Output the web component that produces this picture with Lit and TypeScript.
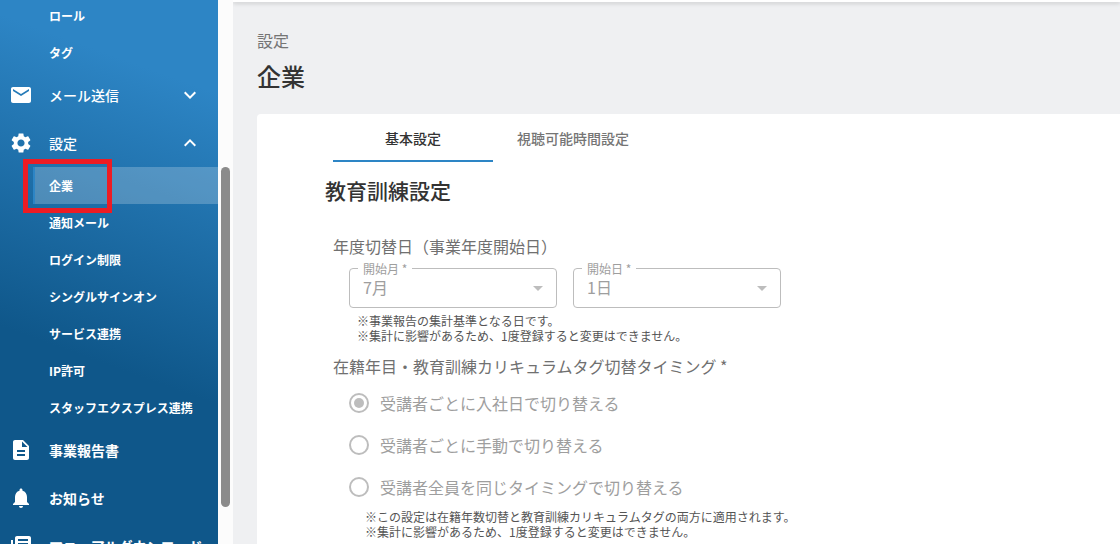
import { LitElement, html, css, nothing } from "lit";
import { customElement, property } from "lit/decorators.js";
import { classMap } from "lit/directives/class-map.js";

const ICONS: Record<string, string> = {
  mail: "M20 4H4c-1.1 0-1.99.9-1.99 2L2 18c0 1.1.9 2 2 2h16c1.1 0 2-.9 2-2V6c0-1.1-.9-2-2-2zm0 4l-8 5-8-5V6l8 5 8-5v2z",
  settings:
    "M19.14 12.94c.04-.3.06-.61.06-.94 0-.32-.02-.64-.07-.94l2.03-1.58c.18-.14.23-.41.12-.61l-1.92-3.32c-.12-.22-.37-.29-.59-.22l-2.39.96c-.5-.38-1.03-.7-1.62-.94l-.36-2.54c-.04-.24-.24-.41-.48-.41h-3.84c-.24 0-.43.17-.47.41l-.36 2.54c-.59.24-1.13.57-1.62.94l-2.39-.96c-.22-.08-.47 0-.59.22L2.74 8.87c-.12.21-.08.47.12.61l2.03 1.58c-.05.3-.09.63-.09.94s.02.64.07.94l-2.03 1.58c-.18.14-.23.41-.12.61l1.92 3.32c.12.22.37.29.59.22l2.39-.96c.5.38 1.03.7 1.62.94l.36 2.54c.05.24.24.41.48.41h3.84c.24 0 .44-.17.47-.41l.36-2.54c.59-.24 1.13-.56 1.62-.94l2.39.96c.22.08.47 0 .59-.22l1.92-3.32c.12-.22.07-.47-.12-.61l-2.01-1.58zM12 15.6c-1.98 0-3.6-1.62-3.6-3.6s1.62-3.6 3.6-3.6 3.6 1.62 3.6 3.6-1.62 3.6-3.6 3.6z",
  report:
    "M14 2H6c-1.1 0-1.99.9-1.99 2L4 20c0 1.1.89 2 1.99 2H18c1.1 0 2-.9 2-2V8l-6-6zm2 16H8v-2h8v2zm0-4H8v-2h8v2zm-3-5V3.5L18.5 9H13z",
  bell: "M12 22c1.1 0 2-.9 2-2h-4c0 1.1.89 2 2 2zm6-6v-5c0-3.07-1.64-5.64-4.5-6.32V4c0-.83-.67-1.5-1.5-1.5s-1.5.67-1.5 1.5v.68C7.63 5.36 6 7.92 6 11v5l-2 2v1h16v-1l-2-2z",
  books:
    "M4 6H2v14c0 1.1.9 2 2 2h14v-2H4V6zm16-4H8c-1.1 0-2 .9-2 2v12c0 1.1.9 2 2 2h12c1.1 0 2-.9 2-2V4c0-1.1-.9-2-2-2zm-1 9H9V9h10v2zm-4 4H9v-2h6v2zm4-8H9V5h10v2z",
  more: "M16.59 8.59L12 13.17 7.41 8.59 6 10l6 6 6-6z",
  less: "M12 8l-6 6 1.41 1.41L12 10.83l4.59 4.58L18 14z",
  drop: "M7 10l5 5 5-5z",
};

const icon = (name: string, cls = "icon") =>
  html`<svg class=${cls} viewBox="0 0 24 24" aria-hidden="true"><path d=${ICONS[name]}></path></svg>`;

@customElement("side-menu")
class SideMenu extends LitElement {
  static styles = css`
    :host {
      display: flex;
      flex: none;
      overflow: hidden;
    }
    .menu {
      width: 218px;
      overflow: hidden;
      color: #fff;
      background: linear-gradient(200deg, #2d85c5 15%, #0f578a 65%);
    }
    .list {
      list-style: none;
      margin: 0;
      padding: 0;
    }
    .root {
      margin-top: -3px;
    }
    .sub,
    .head {
      box-sizing: border-box;
      display: flex;
      align-items: center;
      width: 100%;
      border: 0;
      background: none;
      color: inherit;
      font-family: inherit;
      text-align: left;
      text-decoration: none;
      white-space: nowrap;
    }
    .sub {
      height: 37px;
      padding-left: 49px;
      font-size: 12px;
      font-weight: 700;
    }
    .head {
      height: 48px;
      padding: 0 16px 0 9px;
      gap: 16px;
      font-size: 14px;
      font-weight: 700;
    }
    .group {
      font-weight: 500;
    }
    .text {
      flex: 1;
    }
    .icon {
      flex: none;
      width: 24px;
      height: 24px;
      fill: currentColor;
    }
    .current {
      position: relative;
    }
    .current .sub {
      width: auto;
      margin-left: 33px;
      padding-left: 14px;
      border-left: 2px solid #2d85c5;
      background: rgba(255, 255, 255, 0.22);
    }
    .mark {
      position: absolute;
      box-sizing: border-box;
      left: 23px;
      top: -8px;
      width: 89px;
      height: 54px;
      border: 5px solid #ed1c24;
      pointer-events: none;
    }
    .track {
      box-sizing: border-box;
      width: 15px;
      padding: 167px 3px 0;
      background: #fcfcfc;
    }
    .thumb {
      width: 9px;
      height: 340px;
      border-radius: 5px;
      background: #8b8b8b;
    }
  `;

  private sub(label: string, current = false) {
    return html`<li class=${classMap({ current })}>
      <a class="sub" href="#" aria-current=${current ? "page" : nothing}>${label}</a>
      ${current ? html`<span class="mark"></span>` : nothing}
    </li>`;
  }

  private group(name: string, label: string, open: boolean) {
    return html`<button class="head group" type="button" aria-expanded=${open}>
      ${icon(name)}<span class="text">${label}</span>${icon(open ? "less" : "more")}
    </button>`;
  }

  private page(name: string, label: string) {
    return html`<li><a class="head" href="#">${icon(name)}<span class="text">${label}</span></a></li>`;
  }

  render() {
    return html`
      <nav class="menu">
        <ul class="list root">
          ${["ロール", "タグ"].map((t) => this.sub(t))}
          <li>${this.group("mail", "メール送信", false)}</li>
          <li>
            ${this.group("settings", "設定", true)}
            <ul class="list">
              ${[
                "企業",
                "通知メール",
                "ログイン制限",
                "シングルサインオン",
                "サービス連携",
                "IP許可",
                "スタッフエクスプレス連携",
              ].map((t, i) => this.sub(t, i === 0))}
            </ul>
          </li>
          ${this.page("report", "事業報告書")}
          ${this.page("bell", "お知らせ")}
          ${this.page("books", "マニュアルダウンロード")}
        </ul>
      </nav>
      <div class="track"><div class="thumb"></div></div>
    `;
  }
}

@customElement("outlined-select")
class OutlinedSelect extends LitElement {
  @property() label = "";
  @property() value = "";

  static styles = css`
    :host {
      display: block;
      position: relative;
      width: 208px;
      color: #9e9e9e;
    }
    .label {
      position: absolute;
      left: 9px;
      top: -7px;
      padding: 0 5px;
      background: #fff;
      font-size: 12px;
      line-height: 16px;
    }
    .select {
      appearance: none;
      display: block;
      box-sizing: border-box;
      width: 100%;
      height: 40px;
      margin: 0;
      padding: 0 32px 2px 13px;
      border: 1px solid #bdbdbd;
      border-radius: 4px;
      background: #fff;
      color: inherit;
      font-family: inherit;
      font-size: 16px;
      opacity: 1;
    }
    .arrow {
      position: absolute;
      right: 7px;
      top: 8px;
      width: 24px;
      height: 24px;
      fill: #bdbdbd;
      pointer-events: none;
    }
  `;

  render() {
    return html`
      <select class="select" id="field" disabled required>
        <option>${this.value}</option>
      </select>
      <label class="label" for="field">${this.label} *</label>
      ${icon("drop", "arrow")}
    `;
  }
}

@customElement("app-root")
class AppRoot extends LitElement {
  static styles = css`
    :host {
      display: flex;
      height: 100vh;
      overflow: hidden;
      font-family: "Noto Sans CJK JP", "Noto Sans", sans-serif;
      color: #333;
    }
    .main {
      flex: 1;
      min-width: 0;
      overflow: hidden;
      background: #eff0f2;
    }
    .bar {
      height: 2px;
      background: #fff;
      box-shadow: 0 1px 4px rgba(0, 0, 0, 0.25);
    }
    .content {
      padding: 26px 0 0 24px;
    }
    .crumb {
      margin: 0;
      font-size: 16px;
      line-height: 24px;
      color: #757575;
    }
    .title {
      margin: 6px 0 20px;
      font-size: 24px;
      line-height: 36px;
      font-weight: 500;
    }
    .card {
      min-height: 100vh;
      padding: 0 68px;
      border-radius: 4px 0 0 0;
      background: #fff;
    }
    .tabs {
      display: flex;
      padding-left: 8px;
    }
    .tab {
      width: 160px;
      height: 48px;
      padding: 1px 0 0;
      border: 0;
      border-bottom: 2px solid transparent;
      background: none;
      font-family: inherit;
      font-size: 14px;
      font-weight: 500;
      color: #757575;
    }
    .active {
      border-color: #2d85c5;
      color: #333;
    }
    .heading {
      margin: 12px 0 24px;
      font-size: 21px;
      line-height: 32px;
      font-weight: 500;
    }
    .group {
      margin: 0;
      padding: 0 8px;
      border: 0;
    }
    .legend {
      padding: 0;
      font-size: 16px;
      line-height: 32px;
      color: #707070;
    }
    .fields {
      display: flex;
      gap: 16px;
      padding: 6px 16px 5px;
    }
    .note {
      margin: 0 0 7px;
      padding-left: 24px;
      font-size: 12px;
      line-height: 15px;
      color: #555;
    }
    .options {
      padding: 0 0 1px 16px;
    }
    .option {
      display: flex;
      align-items: center;
      gap: 11px;
      height: 42px;
      font-size: 16px;
      color: #9e9e9e;
    }
    .radio {
      appearance: none;
      display: grid;
      place-content: center;
      box-sizing: border-box;
      width: 20px;
      height: 20px;
      margin: 0;
      border: 2px solid #bdbdbd;
      border-radius: 50%;
    }
    .radio:checked::before {
      content: "";
      width: 10px;
      height: 10px;
      border-radius: 50%;
      background: #bdbdbd;
    }
    .options + .note {
      padding-left: 32px;
    }
  `;

  render() {
    const options = [
      "受講者ごとに入社日で切り替える",
      "受講者ごとに手動で切り替える",
      "受講者全員を同じタイミングで切り替える",
    ];
    return html`
      <side-menu></side-menu>
      <main class="main">
        <div class="bar"></div>
        <div class="content">
          <p class="crumb">設定</p>
          <h1 class="title">企業</h1>
          <section class="card">
            <div class="tabs" role="tablist">
              <button class="tab active" type="button" role="tab" aria-selected="true">基本設定</button>
              <button class="tab" type="button" role="tab" aria-selected="false">視聴可能時間設定</button>
            </div>
            <h2 class="heading">教育訓練設定</h2>
            <fieldset class="group">
              <legend class="legend">年度切替日（事業年度開始日）</legend>
              <div class="fields">
                <outlined-select label="開始月" value="7月"></outlined-select>
                <outlined-select label="開始日" value="1日"></outlined-select>
              </div>
              <p class="note">
                ※事業報告の集計基準となる日です。<br />※集計に影響があるため、1度登録すると変更はできません。
              </p>
            </fieldset>
            <fieldset class="group">
              <legend class="legend">在籍年目・教育訓練カリキュラムタグ切替タイミング *</legend>
              <div class="options">
                ${options.map(
                  (t, i) => html`<label class="option">
                    <input class="radio" type="radio" name="timing" ?checked=${i === 0} disabled />${t}
                  </label>`
                )}
              </div>
              <p class="note">
                ※この設定は在籍年数切替と教育訓練カリキュラムタグの両方に適用されます。<br />※集計に影響があるため、1度登録すると変更はできません。
              </p>
            </fieldset>
          </section>
        </div>
      </main>
    `;
  }
}
